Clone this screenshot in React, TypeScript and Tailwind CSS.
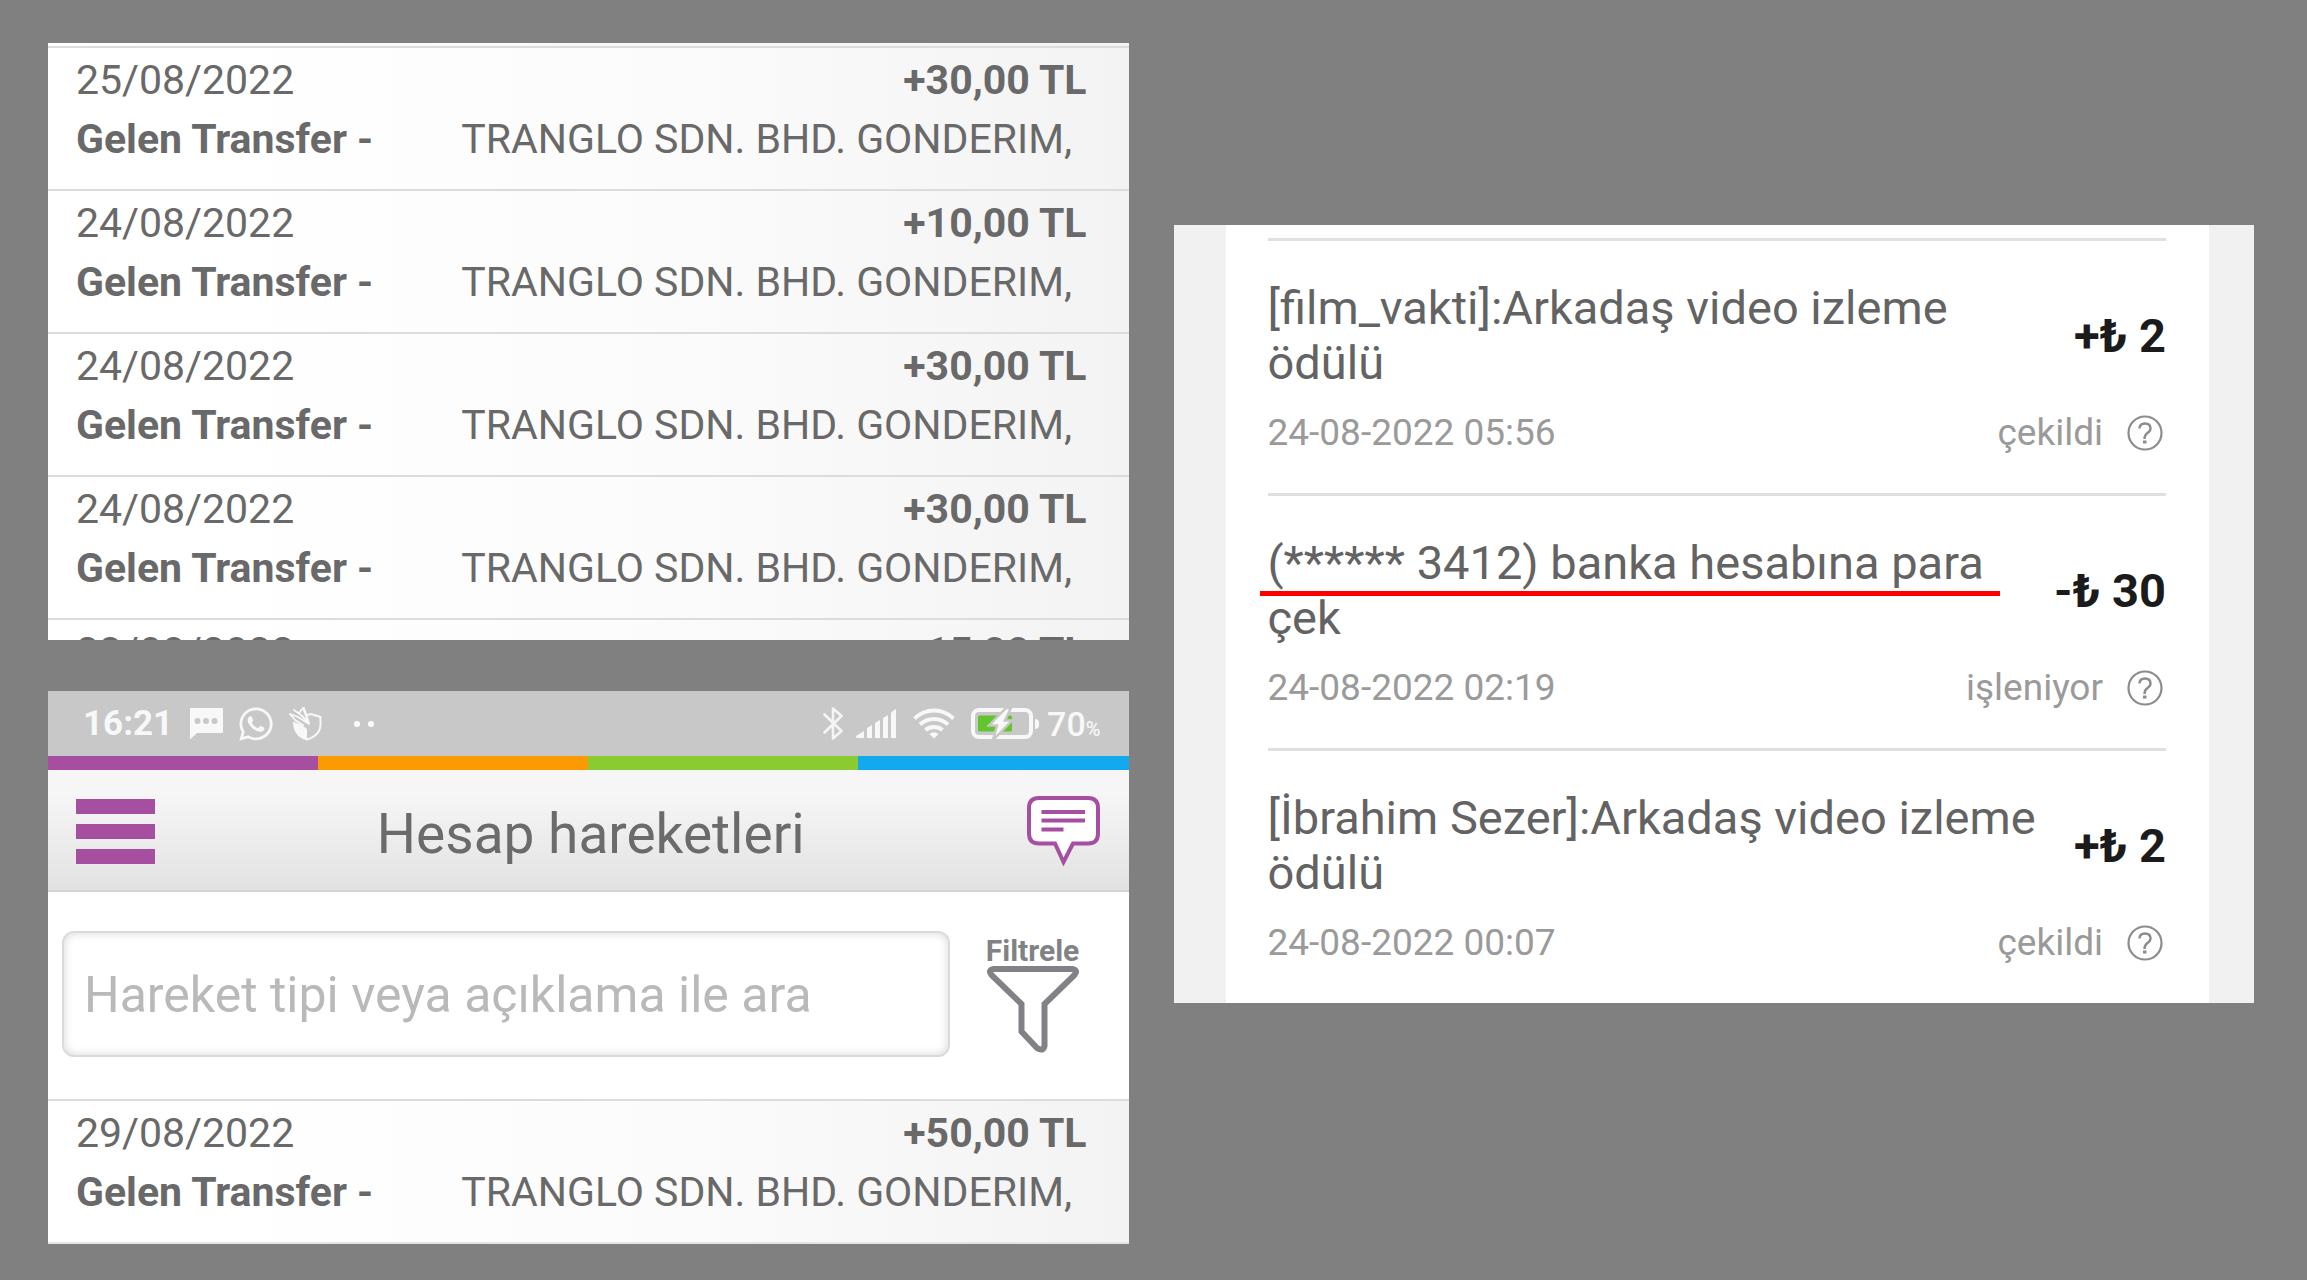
import React from "react";
import { FaWhatsapp } from "react-icons/fa";

type Transfer = { date: string; amount: string; summary?: boolean };

const earlierTransfers: Transfer[] = [
  { date: "25/08/2022", amount: "+30,00 TL" },
  { date: "24/08/2022", amount: "+10,00 TL" },
  { date: "24/08/2022", amount: "+30,00 TL" },
  { date: "24/08/2022", amount: "+30,00 TL" },
  { date: "23/08/2022", amount: "+15,00 TL", summary: true },
];

type Reward = {
  title: string;
  rest: string;
  marked?: boolean;
  amount: string;
  time: string;
  status: string;
};

const rewards: Reward[] = [
  {
    title: "[film_vakti]:Arkadaş video izleme",
    rest: "ödülü",
    amount: "+₺ 2",
    time: "24-08-2022 05:56",
    status: "çekildi",
  },
  {
    title: "(****** 3412) banka hesabına para",
    rest: "çek",
    marked: true,
    amount: "-₺ 30",
    time: "24-08-2022 02:19",
    status: "işleniyor",
  },
  {
    title: "[İbrahim Sezer]:Arkadaş video izleme",
    rest: "ödülü",
    amount: "+₺ 2",
    time: "24-08-2022 00:07",
    status: "çekildi",
  },
];

function TransferRow({ date, amount, summary }: Transfer) {
  return (
    <li className="border-t-2 border-[#dcdcdc] bg-linear-to-r from-white from-15% via-[#fbfbfb] via-60% to-[#f3f3f3] pt-[3px] pr-[42px] pb-5 pl-7 text-[41px] leading-[59px] text-[#696969]">
      <div className="flex justify-between">
        <span>{date}</span>
        <span className="font-bold">{amount}</span>
      </div>
      {!summary && (
        <div className="flex gap-[88px] whitespace-nowrap">
          <span className="font-bold">Gelen Transfer -</span>
          <span>TRANGLO SDN. BHD. GONDERIM,</span>
        </div>
      )}
    </li>
  );
}

function MessageIcon() {
  return (
    <svg width="34" height="32" viewBox="0 0 34 32" aria-hidden="true">
      <path d="M1 0H33Q34 0 34 1V24Q34 25 33 25H8L1 31.5V1Z" fill="#f8f8f8" />
      <circle cx="8.5" cy="13" r="3" fill="#c8c8c8" />
      <circle cx="17" cy="13" r="3" fill="#c8c8c8" />
      <circle cx="25.5" cy="13" r="3" fill="#c8c8c8" />
    </svg>
  );
}

function ShieldIcon() {
  return (
    <svg width="33" height="34" viewBox="0 0 33 34" fill="none" aria-hidden="true">
      <path
        d="M18 8L22 7L31.500 10V17C31.500 25 26 30 18 32.500C10 30 5 24 5 15"
        stroke="#f8f8f8"
        strokeWidth="2"
      />
      <path d="M5 15L13 18L18 22V32.500C10 30 5 24 5 15Z" fill="#f8f8f8" />
      <path
        d="M1 7L9 10L20 17M5 3L12 8L18 14M10 6L14 1L19 14M15 1L20 16M1 7L6 13L14 18"
        stroke="#f8f8f8"
        strokeWidth="1.800"
        strokeLinejoin="round"
        strokeLinecap="round"
      />
    </svg>
  );
}

function BluetoothIcon() {
  return (
    <svg width="21" height="35" viewBox="0 0 21 35" fill="none" aria-hidden="true">
      <path
        d="M1.500 8.500L18.500 25L10 32.500V2.500L18.500 10L1.500 26.500"
        stroke="#f5f5f5"
        strokeWidth="2.600"
        strokeLinejoin="round"
        strokeLinecap="round"
      />
    </svg>
  );
}

function SignalIcon() {
  return (
    <svg width="41" height="30" viewBox="0 0 41 30" fill="#f8f8f8" aria-hidden="true">
      <path d="M0 27L8 22V29H1Q0 29 0 27ZM11 19L16 16V29H11ZM19 14L24 11V29H19ZM27 9L32 6V29H27ZM35 4Q36 2 40 0V29H35Z" />
    </svg>
  );
}

function WifiIcon() {
  return (
    <svg width="42" height="31" viewBox="0 0 42 31" fill="none" aria-hidden="true">
      <g stroke="#f8f8f8" strokeWidth="4">
        <path d="M1.500 10.500Q10 2.500 21 2.500T40.500 10.500" />
        <path d="M7 16.500Q13 11 21 11T35 16.500" />
        <path d="M12.500 22Q16 19 21 19T29.500 22" />
      </g>
      <path d="M16.500 26Q21 22.500 25.500 26L21 30.500Z" fill="#f8f8f8" />
    </svg>
  );
}

function BatteryIcon() {
  return (
    <svg width="68" height="32" viewBox="0 0 68 32" aria-hidden="true">
      <rect x="2" y="2" width="58" height="27" rx="6" fill="none" stroke="#f8f8f8" strokeWidth="4" />
      <rect x="7" y="7.5" width="34" height="16" rx="1.5" fill="#62c52d" />
      <path d="M64 11Q68 11 68 15V17Q68 21 64 21Z" fill="#f8f8f8" />
      <path
        d="M35 0L18 17.500H26L22 32L41 12.500H34L40 0Z"
        fill="#f8f8f8"
        stroke="#c8c8c8"
        strokeWidth="2.500"
      />
    </svg>
  );
}

function ChatIcon() {
  return (
    <svg width="73" height="70" viewBox="0 0 73 70" aria-hidden="true">
      <path
        d="M12 2H61Q71 2 71 12V37.500Q71 47.500 61 47.500H46L36.500 66L28 47.500H12Q2 47.500 2 37.500V12Q2 2 12 2Z"
        fill="#fff"
        stroke="#a64fa0"
        strokeWidth="4"
      />
      <path d="M14.500 16H58M14.500 24.500H58M14.500 33.500H36.500" stroke="#a64fa0" strokeWidth="4" />
    </svg>
  );
}

function FunnelIcon() {
  return (
    <svg width="92" height="87" viewBox="0 0 92 87" aria-hidden="true">
      <path
        d="M7 3H85Q91.500 4 87.500 9L57.500 38V80Q56 86 50 82L34.500 65.500V38L4.500 9Q.500 4 7 3Z"
        fill="none"
        stroke="#818285"
        strokeWidth="6"
      />
    </svg>
  );
}

function HelpIcon() {
  return (
    <svg width="36" height="36" viewBox="0 0 36 36" fill="none" stroke="#8c8c8c" aria-hidden="true">
      <circle cx="18" cy="18" r="16.5" strokeWidth="2.2" />
      <path
        d="M12.500 13.500Q12.500 8.500 18 8.500T23.500 13.500Q23.500 16 20.500 18T17.500 24"
        strokeWidth="2.400"
      />
      <path d="M16 27H19.500" strokeWidth="3" />
    </svg>
  );
}

function StatusBar() {
  return (
    <div className="flex h-[65px] items-center justify-between bg-[#c8c8c8] pr-7 pl-[35px] text-[#f8f8f8]">
      <div className="flex items-center">
        <span className="mr-4 text-[35px] leading-none font-bold">16:21</span>
        <MessageIcon />
        <FaWhatsapp className="mr-3.5 ml-3.5 size-[38px]" aria-hidden="true" />
        <ShieldIcon />
        <span className="ml-8 flex gap-2">
          <span className="size-1.5 rounded-full bg-white" />
          <span className="size-1.5 rounded-full bg-white" />
        </span>
      </div>
      <div className="flex items-center">
        <BluetoothIcon />
        <span className="ml-3">
          <SignalIcon />
        </span>
        <span className="ml-4">
          <WifiIcon />
        </span>
        <span className="ml-4">
          <BatteryIcon />
        </span>
        <span className="ml-2 text-[34px] leading-none font-medium">
          70<span className="text-[20px]">%</span>
        </span>
      </div>
    </div>
  );
}

function AccountPanel() {
  return (
    <section className="bg-white">
      <StatusBar />
      <div className="grid h-3.5 grid-cols-4">
        <div className="bg-[#a64fa0]" />
        <div className="bg-[#fb9a02]" />
        <div className="bg-[#8acb2f]" />
        <div className="bg-[#12a9ef]" />
      </div>
      <header className="flex h-[122px] items-center justify-between border-b-2 border-[#d2d2d2] bg-linear-to-b from-[#f6f6f6] from-20% to-[#e2e2e2] pt-0.5 pr-[29px] pl-7">
        <button type="button" aria-label="Menü" className="flex w-[79px] flex-col gap-2.5">
          <span className="h-[15px] bg-[#a64fa0]" />
          <span className="h-[15px] bg-[#a64fa0]" />
          <span className="h-[15px] bg-[#a64fa0]" />
        </button>
        <h1 className="pt-1.5 text-[55px] leading-none text-[#6b6b6b]">Hesap hareketleri</h1>
        <button type="button" aria-label="Mesajlar">
          <ChatIcon />
        </button>
      </header>
      <div className="flex items-center pt-[39px] pr-[50px] pb-[42px] pl-3.5">
        <input
          type="text"
          aria-label="Hareket tipi veya açıklama ile ara"
          placeholder="Hareket tipi veya açıklama ile ara"
          className="h-[126px] min-w-0 flex-1 rounded-xl border-2 border-[#dadada] bg-white px-5 pt-0.5 text-[50px] text-[#696969] shadow-[inset_0_0_10px_rgba(0,0,0,0.16)] outline-none placeholder:text-[#b9b9b9]"
        />
        <button
          type="button"
          className="ml-[37px] flex w-[92px] flex-col items-center text-[30px] leading-[30px] font-bold text-[#818285]"
        >
          Filtrele
          <FunnelIcon />
        </button>
      </div>
      <ul className="border-b-2 border-[#e4e4e4]">
        <TransferRow date="29/08/2022" amount="+50,00 TL" />
      </ul>
    </section>
  );
}

function RewardRow({ title, rest, marked, amount, time, status }: Reward) {
  return (
    <li className="border-t-[3px] border-[#e0e0e0] pt-[39px] pb-[39px]">
      <div className="flex items-center justify-between gap-6">
        <p className="text-[47px] leading-[55px] text-[#636363]">
          {marked ? (
            <mark className="relative inline-block bg-transparent text-inherit">
              {title}
              <span className="absolute -right-4 -bottom-1.5 -left-2 h-[5px] bg-[#ff0000]" />
            </mark>
          ) : (
            title
          )}{" "}
          {rest}
        </p>
        <span className="text-[47px] leading-[55px] font-bold whitespace-nowrap text-[#1b1b1b]">
          {amount}
        </span>
      </div>
      <div className="mt-[22px] flex items-center text-[37px] leading-[42px] text-[#9a9a9a]">
        <time className="flex-1">{time}</time>
        <span>{status}</span>
        <button type="button" aria-label="Yardım" className="mr-[3px] ml-6">
          <HelpIcon />
        </button>
      </div>
    </li>
  );
}

export default function App() {
  return (
    <main className="grid min-h-screen grid-cols-2 items-start gap-[45px] bg-[#808080] pt-[43px] pr-[53px] pb-9 pl-12 font-['Roboto',sans-serif]">
      <div className="flex min-w-0 flex-col gap-[51px]">
        <section className="h-[597px] overflow-hidden bg-linear-to-r from-white to-[#f3f3f3] pt-[3px]">
          <ul>
            {earlierTransfers.map((t, i) => (
              <TransferRow key={i} {...t} />
            ))}
          </ul>
        </section>
        <AccountPanel />
      </div>
      <section className="mt-[182px] min-w-0 bg-[#f1f1f1] pr-[45px] pl-[52px]">
        <ul className="bg-white pt-[13px] pr-[43px] pl-[42px]">
          {rewards.map((r) => (
            <RewardRow key={r.time} {...r} />
          ))}
        </ul>
      </section>
    </main>
  );
}
